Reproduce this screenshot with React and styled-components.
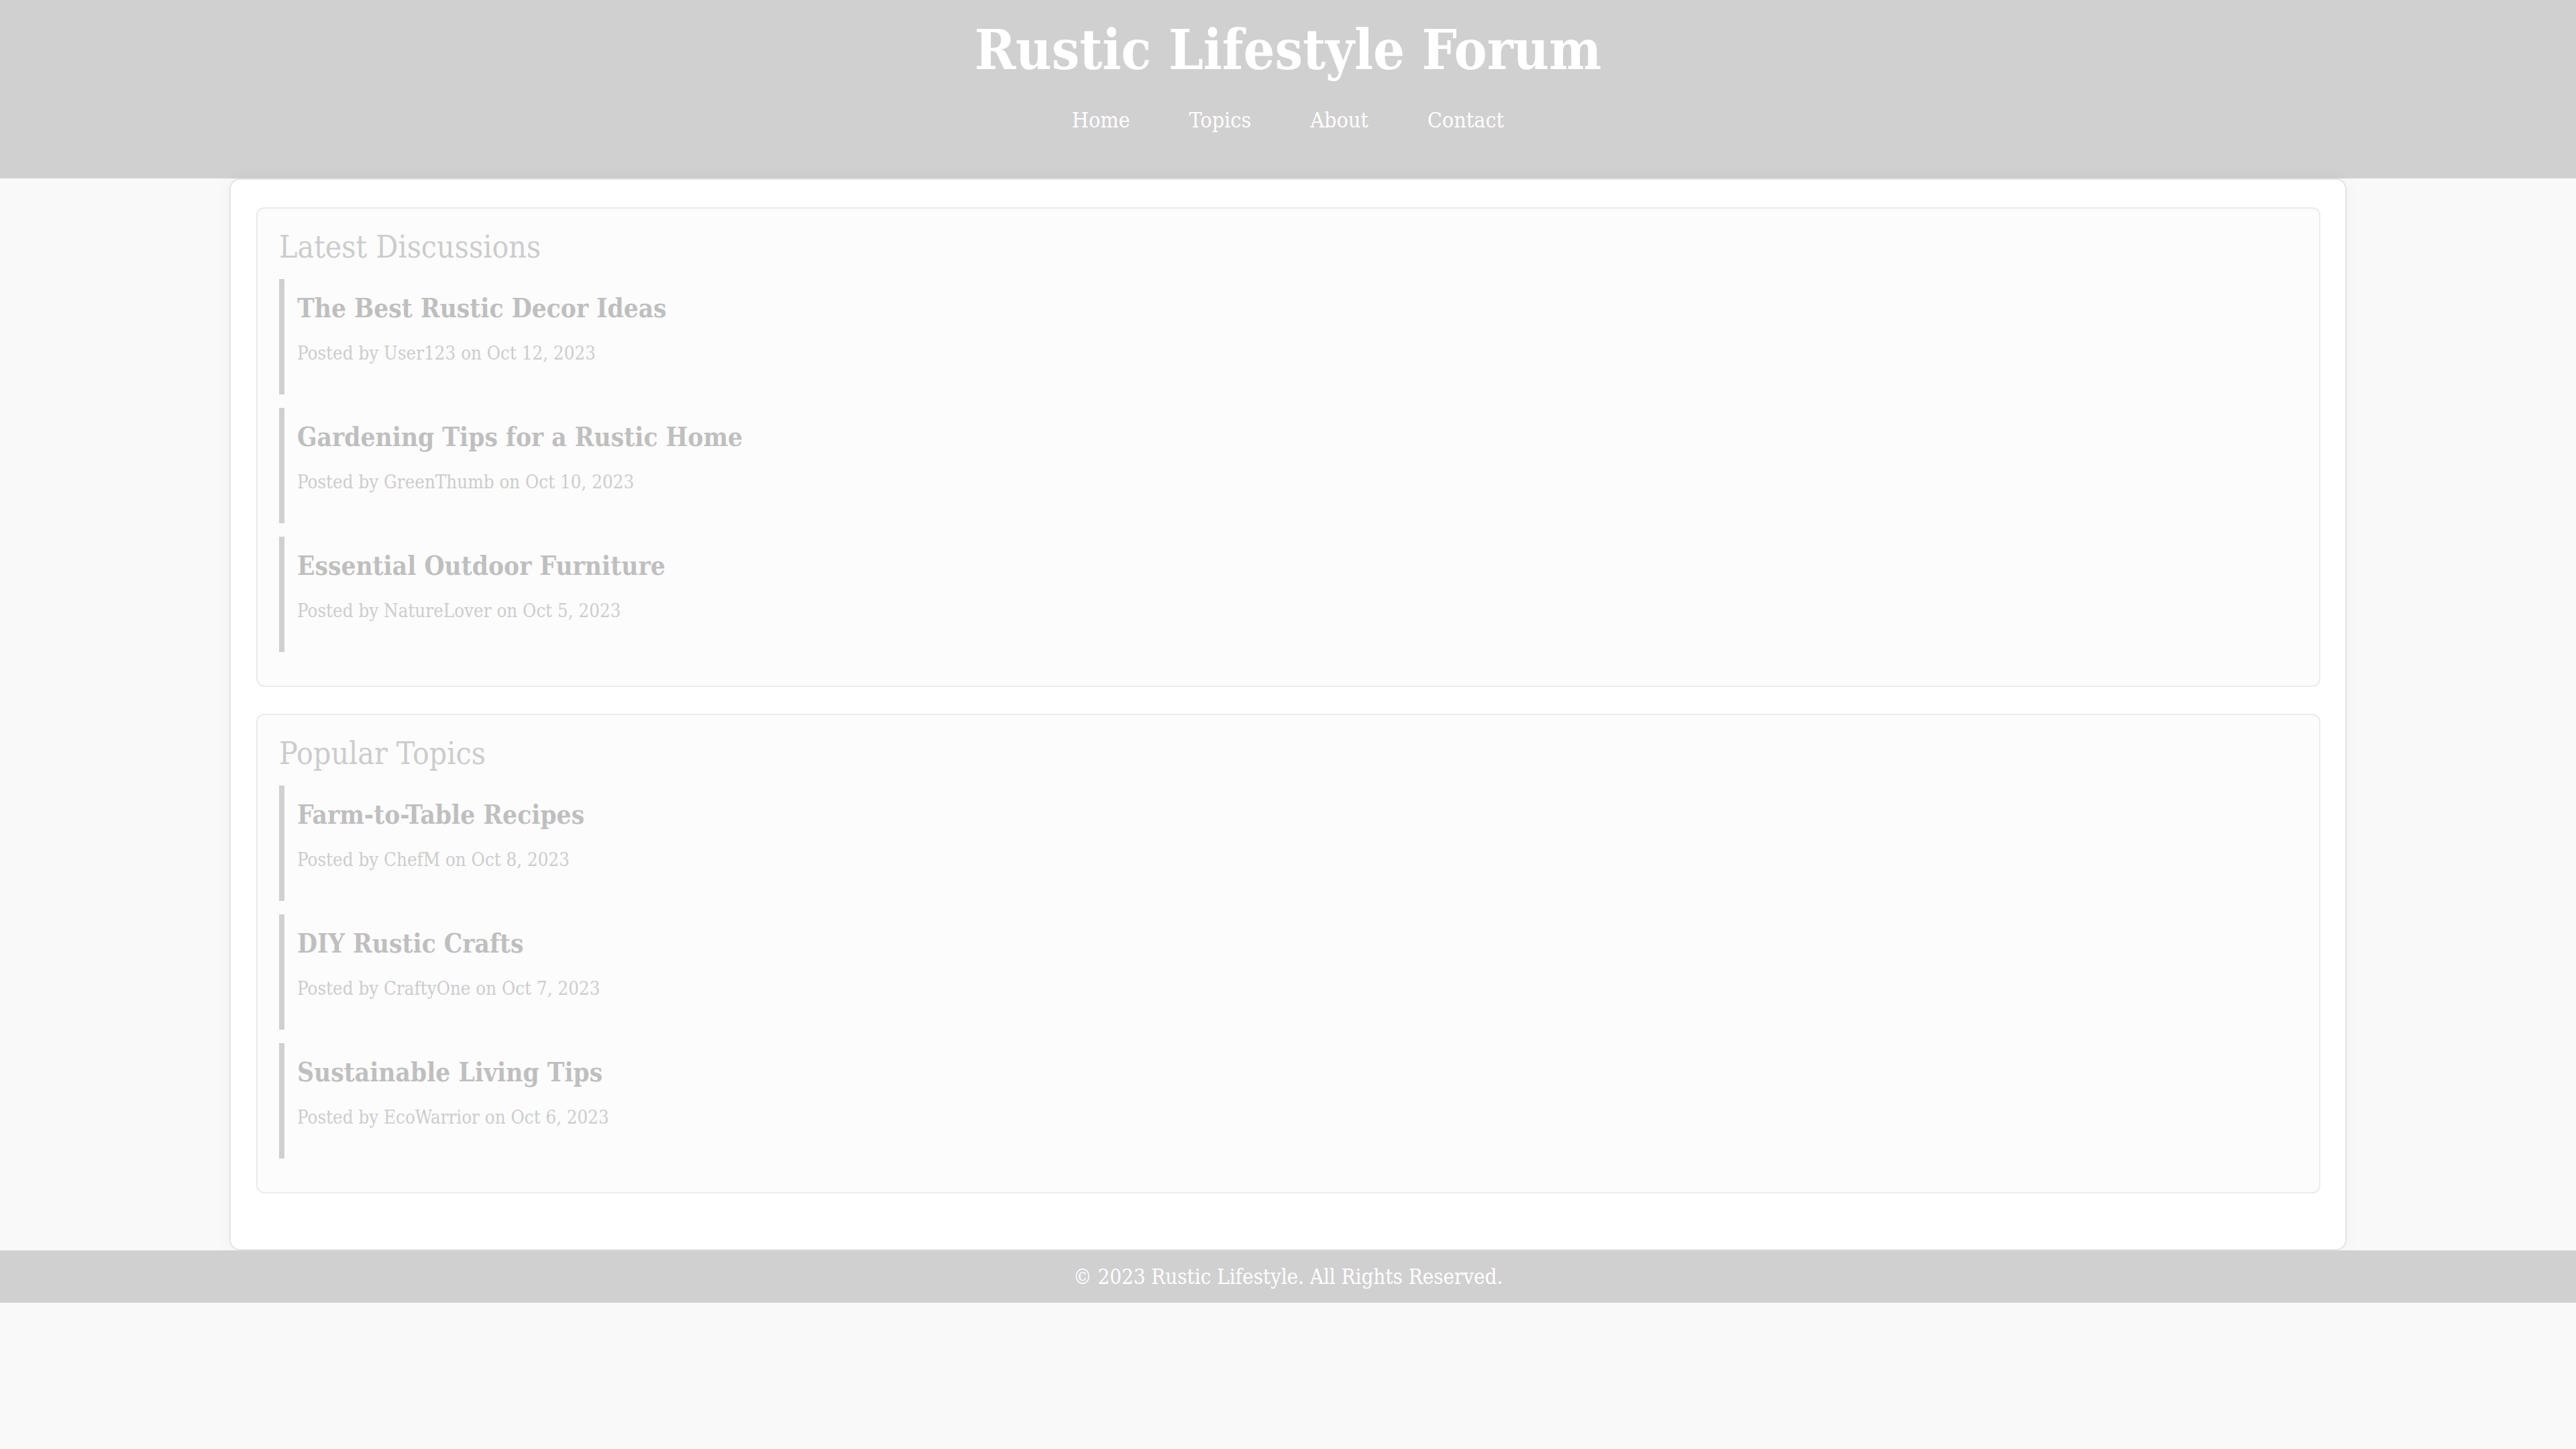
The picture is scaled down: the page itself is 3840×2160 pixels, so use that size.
import React from "react";
import styled, { createGlobalStyle } from "styled-components";

const latest = [
	{ title: "The Best Rustic Decor Ideas", author: "User123", date: "Oct 12, 2023" },
	{ title: "Gardening Tips for a Rustic Home", author: "GreenThumb", date: "Oct 10, 2023" },
	{ title: "Essential Outdoor Furniture", author: "NatureLover", date: "Oct 5, 2023" },
];

const popular = [
	{ title: "Farm-to-Table Recipes", author: "ChefM", date: "Oct 8, 2023" },
	{ title: "DIY Rustic Crafts", author: "CraftyOne", date: "Oct 7, 2023" },
	{ title: "Sustainable Living Tips", author: "EcoWarrior", date: "Oct 6, 2023" },
];

const links = ["Home", "Topics", "About", "Contact"];

const Section = ({ heading, posts }) => (
	<Card>
		<SectionTitle>{heading}</SectionTitle>
		{posts.map((post) => (
			<Post key={post.title}>
				<PostTitle>{post.title}</PostTitle>
				<Meta>
					Posted by {post.author} on {post.date}
				</Meta>
			</Post>
		))}
	</Card>
);

const App = () => {
	return (
		<>
			<GlobalStyle />
			<Header>
				<Title>Rustic Lifestyle Forum</Title>
				<Nav>
					{links.map((link) => (
						<NavLink key={link} href="#">
							{link}
						</NavLink>
					))}
				</Nav>
			</Header>
			<Main>
				<Section heading="Latest Discussions" posts={latest} />
				<Section heading="Popular Topics" posts={popular} />
			</Main>
			<Footer>© 2023 Rustic Lifestyle. All Rights Reserved.</Footer>
		</>
	);
};

export default App;

const GlobalStyle = createGlobalStyle`
	* {
		box-sizing: border-box;
	}
	body {
		margin: 0;
		background: #f9f9f9;
		font-family: Georgia, "DejaVu Serif", serif;
		font-stretch: condensed;
	}
`;

const Header = styled.header`
	background: #d0d0d0;
	color: #ffffff;
	text-align: center;
	padding: 26px 0 67px;
`;

const Title = styled.h1`
	margin: 0;
	font-size: 82px;
	line-height: 96px;
	font-weight: bold;
`;

const Nav = styled.nav`
	display: flex;
	justify-content: center;
	gap: 88px;
	margin-top: 37px;
`;

const NavLink = styled.a`
	color: #ffffff;
	text-decoration: none;
	font-size: 32px;
	line-height: 40px;
`;

const Main = styled.main`
	width: 3156px;
	margin: 0 auto;
	background: #ffffff;
	border: 2px solid #e4e4e4;
	border-radius: 16px;
	box-shadow: 0 0 24px rgba(0, 0, 0, 0.04);
	padding: 41px 37px 43px 38px;
`;

const Card = styled.section`
	background: #fcfcfc;
	border: 2px solid #ebebeb;
	border-radius: 12px;
	padding: 28px 32px 30px;
	margin-bottom: 40px;
`;

const SectionTitle = styled.h2`
	margin: 0 0 19px;
	font-size: 46px;
	line-height: 58px;
	font-weight: normal;
	color: #cccccc;
`;

const Post = styled.div`
	border-left: 8px solid #d0d0d0;
	padding: 20px 0 44px 19px;
	margin-bottom: 20px;
`;

const PostTitle = styled.h3`
	margin: 0 0 24px;
	font-size: 38.5px;
	line-height: 48px;
	font-weight: bold;
	color: #bfbfbf;
`;

const Meta = styled.p`
	margin: 0;
	font-size: 27.5px;
	line-height: 36px;
	color: #cccccc;
`;

const Footer = styled.footer`
	background: #d0d0d0;
	color: #ffffff;
	text-align: center;
	padding: 20px 0;
	font-size: 31px;
	line-height: 38px;
`;
